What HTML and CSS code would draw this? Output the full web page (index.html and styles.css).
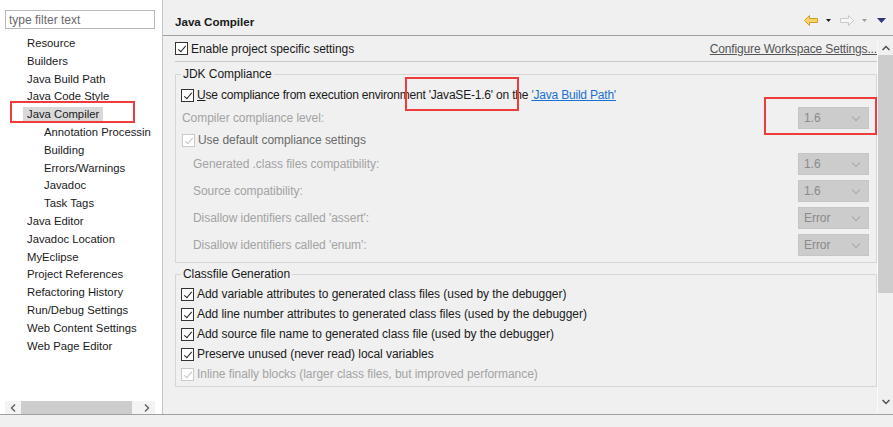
FILE: index.html
```html
<!DOCTYPE html>
<html lang="en">
<head>
    <title>Properties - Java Compiler</title>
    <link rel="stylesheet" href="styles.css">
</head>
<body>
<div class="win">
    <div class="main">
        <div class="side">
            <input class="filter" type="text" placeholder="type filter text">
            <ul class="tree">
                <li>Resource</li>
                <li>Builders</li>
                <li>Java Build Path</li>
                <li>Java Code Style</li>
                <li class="sel"><span>Java Compiler</span></li>
                <li class="sub">Annotation Processin</li>
                <li class="sub">Building</li>
                <li class="sub">Errors/Warnings</li>
                <li class="sub">Javadoc</li>
                <li class="sub">Task Tags</li>
                <li>Java Editor</li>
                <li>Javadoc Location</li>
                <li>MyEclipse</li>
                <li>Project References</li>
                <li>Refactoring History</li>
                <li>Run/Debug Settings</li>
                <li>Web Content Settings</li>
                <li>Web Page Editor</li>
            </ul>
            <div class="hscroll">
                <span class="sarrow"><svg width="6" height="8" viewBox="0 0 6 8"><path d="M5 0.5 L1.5 4 L5 7.5" fill="none" stroke="#606060" stroke-width="1.4"/></svg></span>
                <span class="hthumb"></span>
                <span class="sarrow"><svg width="6" height="8" viewBox="0 0 6 8"><path d="M1 0.5 L4.5 4 L1 7.5" fill="none" stroke="#606060" stroke-width="1.4"/></svg></span>
            </div>
        </div>

        <div class="content">
            <div class="head">
                <span class="title">Java Compiler</span>
                <div class="tools">
                    <svg class="back" width="14" height="11" viewBox="0 0 14 11"><path d="M0.5 5.5 L5.5 0.5 L5.5 3.5 L13.5 3.5 L13.5 7.5 L5.5 7.5 L5.5 10.5 Z" fill="#fbd46a" stroke="#d9982a"/></svg>
                    <svg class="drop" width="5" height="3" viewBox="0 0 5 3"><path d="M0 0 H5 L2.5 3 Z" fill="#1e1e1e"/></svg>
                    <svg class="fwd" width="14" height="11" viewBox="0 0 14 11"><path d="M13.5 5.5 L8.5 0.5 L8.5 3.5 L0.5 3.5 L0.5 7.5 L8.5 7.5 L8.5 10.5 Z" fill="#f7f7f7" stroke="#cacaca"/></svg>
                    <svg class="drop" width="5" height="3" viewBox="0 0 5 3"><path d="M0 0 H5 L2.5 3 Z" fill="#9a9a9a"/></svg>
                    <svg class="menu" width="9" height="5" viewBox="0 0 9 5"><path d="M0 0 H9 L4.5 5 Z" fill="#2f3577"/></svg>
                </div>
            </div>

            <div class="body">
                <div class="pane">
                    <div class="enable">
                        <span class="cb"></span>
                        <span>Enable project specific settings</span>
                        <a class="ws">Configure Workspace Settings...</a>
                    </div>

                    <fieldset class="grp jdk">
                        <legend>JDK Compliance</legend>
                        <div class="row first tight">
                            <span class="cb"></span>
                            <span><u>U</u>se compliance from execution environment 'JavaSE-1.6' on the <a class="link">'Java Build Path'</a></span>
                        </div>
                        <div class="row r25 dim lvl">
                            <span>Compiler compliance level:</span>
                            <span class="combo">1.6</span>
                        </div>
                        <div class="row usedef">
                            <span class="cb off"></span>
                            <span>Use default compliance settings</span>
                        </div>
                        <div class="row r27 dim ind">
                            <span>Generated .class files compatibility:</span>
                            <span class="combo">1.6</span>
                        </div>
                        <div class="row r27 dim ind">
                            <span>Source compatibility:</span>
                            <span class="combo">1.6</span>
                        </div>
                        <div class="row r27 dim ind">
                            <span>Disallow identifiers called 'assert':</span>
                            <span class="combo">Error</span>
                        </div>
                        <div class="row r27 dim ind">
                            <span>Disallow identifiers called 'enum':</span>
                            <span class="combo">Error</span>
                        </div>
                    </fieldset>

                    <fieldset class="grp cls">
                        <legend>Classfile Generation</legend>
                        <div class="row first"><span class="cb"></span><span>Add variable attributes to generated class files (used by the debugger)</span></div>
                        <div class="row"><span class="cb"></span><span>Add line number attributes to generated class files (used by the debugger)</span></div>
                        <div class="row"><span class="cb"></span><span>Add source file name to generated class file (used by the debugger)</span></div>
                        <div class="row"><span class="cb"></span><span>Preserve unused (never read) local variables</span></div>
                        <div class="row dim"><span class="cb off"></span><span>Inline finally blocks (larger class files, but improved performance)</span></div>
                    </fieldset>
                </div>

                <div class="vscroll">
                    <span class="varrow"><svg width="8" height="6" viewBox="0 0 8 6"><path d="M0.5 5 L4 1.5 L7.5 5" fill="none" stroke="#505050" stroke-width="1.5"/></svg></span>
                    <span class="vthumb"></span>
                    <span class="varrow down"><svg width="8" height="6" viewBox="0 0 8 6"><path d="M0.5 1 L4 4.5 L7.5 1" fill="none" stroke="#505050" stroke-width="1.5"/></svg></span>
                </div>
            </div>
        </div>
    </div>
    <div class="status"></div>
</div>

<!-- red annotation boxes drawn over the dialog -->
<div class="mark m1"></div>
<div class="mark m2"></div>
<div class="mark m3"></div>
</body>
</html>
```

FILE: styles.css
```css
body {
    margin: 0;
    width: 893px;
    height: 427px;
    overflow: hidden;
    position: relative;
    background: #f0f0f0;
    color: #1a1a1a;
    font: 12px "Liberation Sans", Arial, sans-serif;
}
.win {
    display: flex;
    flex-direction: column;
    height: 427px;
}
.main {
    display: flex;
    height: 414px;
    border-bottom: 1px solid #a0a0a0;
}

/* left tree */
.side {
    width: 162px;
    background: #fff;
    border-right: 1px solid #c4c4c4;
    display: flex;
    flex-direction: column;
}
.filter {
    margin: 10px 0 0 5px;
    width: 150px;
    height: 19px;
    box-sizing: border-box;
    border: 1px solid #b9b9b9;
    padding: 0 3px;
    font: inherit;
    outline: none;
}
.filter::placeholder {
    color: #6a6a6a;
}
.tree {
    list-style: none;
    margin: 6px 0 0;
    padding: 0;
    font-size: 11.3px;
    line-height: 17.8px;
    white-space: nowrap;
}
.tree li {
    padding-left: 27px;
}
.tree li.sub {
    padding-left: 44px;
}
.tree .sel span {
    background: #d9d9d9;
    padding: 1px 4px 1px;
    margin-left: -4px;
}
.hscroll {
    margin: auto 0 0 5px;
    width: 150px;
    height: 13px;
    display: flex;
    align-items: center;
    background: #f4f4f4;
}
.sarrow {
    width: 16px;
    display: flex;
    justify-content: center;
}
.hthumb {
    width: 111px;
    height: 13px;
    background: #cdcdcd;
    margin-right: auto;
}

/* right side */
.content {
    flex: 1;
    display: flex;
    flex-direction: column;
}
.head {
    height: 36px;
    box-sizing: border-box;
    padding: 5px 7px 0 12px;
    border-bottom: 1px solid #a0a0a0;
    display: flex;
    align-items: center;
}
.title {
    flex: 1;
    font-weight: bold;
    font-size: 11.6px;
    padding-top: 2px;
}
.tools {
    display: flex;
    align-items: center;
}
.tools .drop {
    margin: 0 9px 0 8px;
}
.tools .menu {
    margin-left: 1px;
}
.body {
    flex: 1;
    display: flex;
}
.pane {
    flex: 1;
    padding-left: 12px;
    letter-spacing: -0.05px;
}
.enable {
    height: 25px;
    display: flex;
    align-items: center;
    border-bottom: 1px solid #c9c9c9;
}
.enable .cb {
    margin-right: 3px;
}
.ws {
    margin-left: auto;
    color: #555;
    text-decoration: underline;
    letter-spacing: -0.15px;
}

.grp {
    margin: 4px 0 0;
    padding: 0 7px 4px 5px;
    border: 1px solid #d6d6d6;
    min-width: 0;
}
.grp legend {
    padding: 0 2px;
    line-height: 16px;
}
.cls {
    margin-top: 3px;
    padding-bottom: 2px;
}
.row {
    display: flex;
    align-items: center;
    height: 20px;
    white-space: nowrap;
}
.row .cb {
    margin-right: 3px;
}
.row.first {
    margin-top: 3px;
}
.row.tight {
    letter-spacing: -0.2px;
}
.cls .row.first {
    margin-top: 2px;
}
.row.r25 {
    height: 25px;
}
.row.r27 {
    height: 27px;
}
.row.lvl {
    padding-left: 1px;
}
.row.usedef {
    color: #6a6a6a;
    padding-left: 1px;
}
.row.ind {
    padding-left: 12px;
}
.dim {
    color: #a3a3a3;
}
.link {
    color: #1a6fd4;
    text-decoration: underline;
}
.combo {
    margin-left: auto;
    width: 71px;
    height: 22px;
    box-sizing: border-box;
    padding-left: 5px;
    background: #cccccc;
    border: 1px solid #c6c6c6;
    color: #8a8a8a;
    display: flex;
    align-items: center;
    position: relative;
}
.combo::after {
    content: "";
    position: absolute;
    right: 9px;
    top: 6px;
    width: 5px;
    height: 5px;
    border: solid #a9a9a9;
    border-width: 0 1px 1px 0;
    transform: rotate(45deg);
}

/* checkboxes */
.cb {
    width: 13px;
    height: 13px;
    box-sizing: border-box;
    border: 1px solid #333;
    background: #fff;
    position: relative;
    flex: none;
}
.cb::after {
    content: "";
    position: absolute;
    left: 4px;
    top: 1px;
    width: 3px;
    height: 7px;
    border: solid #222;
    border-width: 0 1.4px 1.4px 0;
    transform: rotate(40deg);
}
.cb.off {
    border-color: #c9c9c9;
}
.cb.off::after {
    border-color: #c4c4c4;
}

.vscroll {
    width: 16px;
    margin: 5px 0 2px;
    display: flex;
    flex-direction: column;
    background: #f0f0f0;
    border-left: 1px solid #fafafa;
    box-sizing: border-box;
}
.varrow {
    height: 14px;
    display: flex;
    align-items: center;
    justify-content: center;
}
.varrow.down {
    margin-top: auto;
    margin-bottom: 3px;
}
.vthumb {
    height: 238px;
    background: #cdcdcd;
}

.status {
    flex: 1;
}

.mark {
    position: absolute;
    border: 2px solid #ef3b3b;
    box-sizing: border-box;
}
.m1 {
    left: 10px;
    top: 101px;
    width: 125px;
    height: 22px;
}
.m2 {
    left: 405px;
    top: 77px;
    width: 114px;
    height: 34px;
}
.m3 {
    left: 764px;
    top: 97px;
    width: 113px;
    height: 38px;
}
```
